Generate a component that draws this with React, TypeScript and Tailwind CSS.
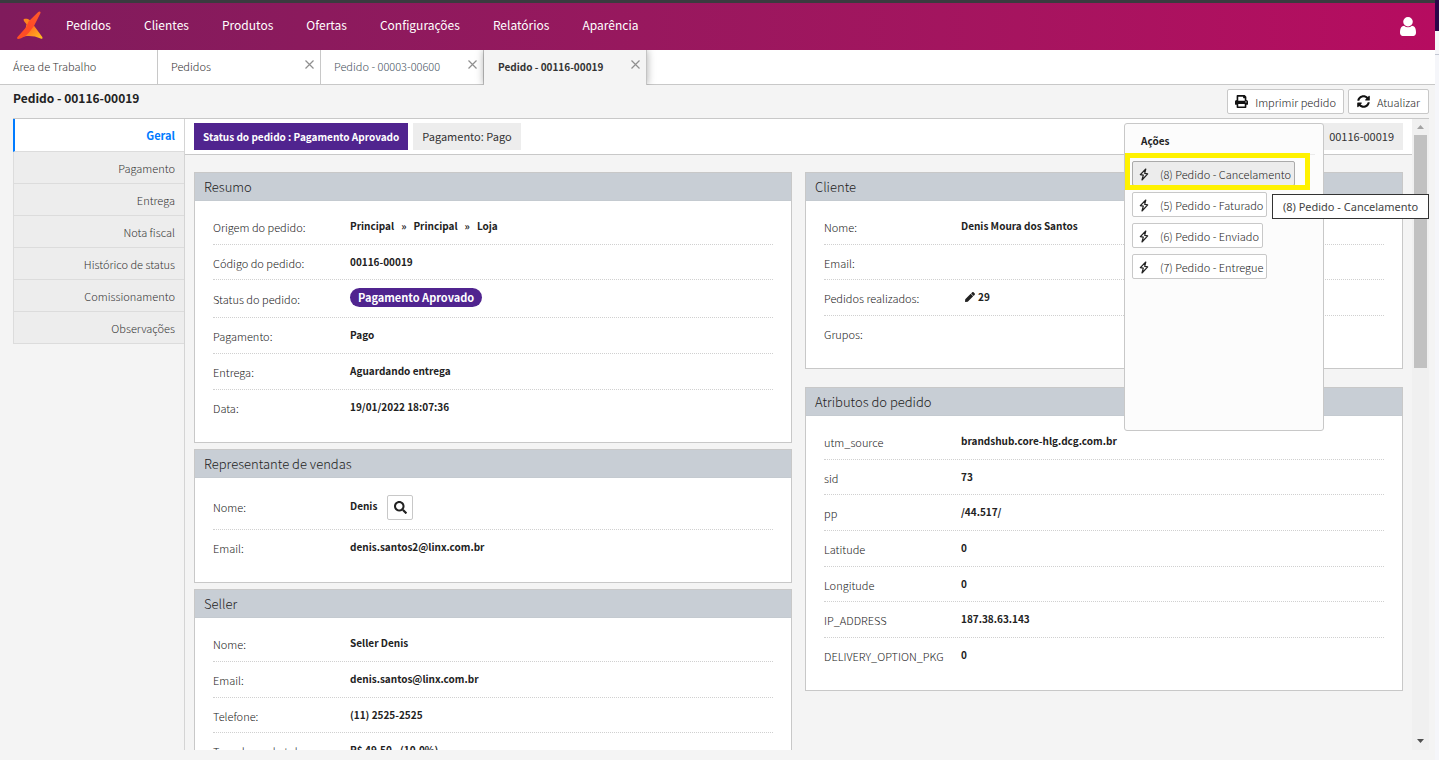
import type { ReactNode } from "react";
import { FaPen, FaPrint, FaSearch, FaSyncAlt } from "react-icons/fa";

type Field = { label: string; value?: ReactNode; size?: "tall" | "badge" | "compact" };

const nav = ["Pedidos", "Clientes", "Produtos", "Ofertas", "Configurações", "Relatórios", "Aparência"];

const sections = ["Geral", "Pagamento", "Entrega", "Nota fiscal", "Histórico de status", "Comissionamento", "Observações"];

const actions = ["(8) Pedido - Cancelamento", "(5) Pedido - Faturado", "(6) Pedido - Enviado", "(7) Pedido - Entregue"];

const summary: Field[] = [
  {
    label: "Origem do pedido:",
    value: (
      <span className="flex gap-[7px]">
        <span>Principal</span>
        <span>»</span>
        <span>Principal</span>
        <span>»</span>
        <span>Loja</span>
      </span>
    ),
  },
  { label: "Código do pedido:", value: "00116-00019", size: "compact" },
  {
    label: "Status do pedido:",
    size: "badge",
    value: (
      <span className="block rounded-full bg-[#50248f] px-2 text-[11px] leading-[19px] text-white">Pagamento Aprovado</span>
    ),
  },
  { label: "Pagamento:", value: "Pago" },
  { label: "Entrega:", value: "Aguardando entrega" },
  { label: "Data:", value: "19/01/2022 18:07:36" },
];

const representative: Field[] = [
  {
    label: "Nome:",
    size: "tall",
    value: (
      <span className="flex gap-[10px]">
        Denis
        <button
          type="button"
          aria-label="Buscar representante"
          className="-mt-px flex h-[25px] w-[26px] items-center justify-center rounded-[2px] border border-[#c8c8c8] bg-white text-[#222]"
        >
          <FaSearch size={13} />
        </button>
      </span>
    ),
  },
  { label: "Email:", value: "denis.santos2@linx.com.br" },
];

const seller: Field[] = [
  { label: "Nome:", value: "Seller Denis" },
  { label: "Email:", value: "denis.santos@linx.com.br" },
  { label: "Telefone:", value: "(11) 2525-2525", size: "compact" },
  { label: "Taxa de marketplace:", value: "R$ 49,50 - (10.0%)" },
];

const customer: Field[] = [
  { label: "Nome:", value: "Denis Moura dos Santos" },
  { label: "Email:", size: "compact" },
  {
    label: "Pedidos realizados:",
    value: (
      <span className="flex items-center gap-[3px] pl-1">
        <FaPen size={10} />
        29
      </span>
    ),
  },
  { label: "Grupos:" },
];

const attributes: Field[] = [
  { label: "utm_source", value: "brandshub.core-hlg.dcg.com.br" },
  { label: "sid", value: "73", size: "compact" },
  { label: "pp", value: "/44.517/" },
  { label: "Latitude", value: "0" },
  { label: "Longitude", value: "0", size: "compact" },
  { label: "IP_ADDRESS", value: "187.38.63.143" },
  { label: "DELIVERY_OPTION_PKG", value: "0" },
];

function Logo() {
  return (
    <svg width="28" height="30" viewBox="0 0 28 30" aria-label="Linx" role="img">
      <defs>
        <linearGradient id="arm" x1="1" y1="0" x2="0" y2="1">
          <stop offset="0" stopColor="#ff5a2a" />
          <stop offset="0.5" stopColor="#ff4a26" />
          <stop offset="1" stopColor="#ff4f23" />
        </linearGradient>
        <linearGradient id="leg" x1="0" y1="0" x2="1" y2="1">
          <stop offset="0" stopColor="#ff8a1c" />
          <stop offset="0.5" stopColor="#ff7a1f" />
          <stop offset="1" stopColor="#ffc220" />
        </linearGradient>
      </defs>
      <path d="M7.6 9.2C9.8 8.2 12 8.8 13.6 10L18.6 16.6L26.3 27C26.9 28.6 26 29.3 24.6 28.6C17.5 25.4 9.5 25.4 3.5 28L9.6 18.5L10.5 14.3C9.4 12.7 7.2 10.6 7.6 9.2Z" fill="url(#leg)" />
      <path d="M22 2.3C23.3 .7 25.2 1.5 24.4 3.3L18 16L13 22.5C10 26 6 28.3 2.5 29C.8 29.1 .7 27.8 1.7 26.7L10 17.5L12.5 11.5Z" fill="url(#arm)" />
    </svg>
  );
}

function UserIcon() {
  return (
    <svg width="16" height="19" viewBox="0 128 1280 1536" preserveAspectRatio="none" fill="currentColor" aria-hidden="true">
      <path d="M1280 1399q0 109-62.5 187t-150.5 78h-854q-88 0-150.5-78t-62.5-187q0-85 8.5-160.5t31.5-152 58.5-131 94-89 134.5-34.5q131 128 313 128t313-128q76 0 134.5 34.5t94 89 58.5 131 31.5 152 8.5 160.5zm-256-887q0 159-112.5 271.5t-271.5 112.5-271.5-112.5-112.5-271.5 112.5-271.5 271.5-112.5 271.5 112.5 112.5 271.5z" />
    </svg>
  );
}

function BoltIcon() {
  return (
    <svg width="10" height="13" viewBox="0 0 10 13" fill="none" stroke="#222" strokeWidth="1.2" strokeLinejoin="round" aria-hidden="true">
      <path d="M6.8 1L1.3 6.6L4.3 7.2L3 12L8.7 5.9L5.7 5.4Z" />
    </svg>
  );
}

function CloseIcon() {
  return (
    <svg width="9" height="9" viewBox="0 0 9 9" stroke="#8f8f8f" strokeWidth="1.2" aria-hidden="true">
      <path d="M.5 .5L8.5 8.5M8.5 .5L.5 8.5" />
    </svg>
  );
}

function Tab({ title, active, link }: { title: string; active?: boolean; link?: boolean }) {
  return (
    <div
      className={
        active
          ? "relative flex h-[35px] w-[163px] items-start justify-between border-r border-[#c4c4c4] bg-[#f4f4f4] pr-[6px] pl-[14px] font-bold text-[#333] shadow-[0_0_8px_rgba(0,0,0,0.35)] [clip-path:inset(0_-10px_0_-10px)]"
          : "flex h-[35px] w-[163px] items-start justify-between border-r border-b border-[#c8c8c8] pr-[6px] pl-[13px]"
      }
    >
      <a
        href="#"
        className={
          active
            ? "text-[10px] leading-[34px]"
            : link
              ? "text-[11px] leading-8 font-light text-[#45525d]"
              : "text-[11px] leading-8 font-light text-[#333]"
        }
      >
        {title}
      </a>
      <button type="button" aria-label={`Fechar ${title}`} className="pt-[10px]">
        <CloseIcon />
      </button>
    </div>
  );
}

function Card({ title, fields }: { title: string; fields: Field[] }) {
  return (
    <section className="border border-[#c8c8c8] bg-white pb-4">
      <h2 className="h-[28px] border-b border-[#c4cad0] bg-[#c8ced5] pl-[9px] text-[13px] leading-[28px] font-light text-[#222]">{title}</h2>
      <dl className="px-[18px] pt-2">
        {fields.map((f) => (
          <div
            key={f.label}
            className={
              f.size === "tall"
                ? "flex h-[44px] border-b border-dotted border-[#d0d0d0] pt-[10px]"
                : f.size === "badge"
                  ? "flex h-[38px] border-b border-dotted border-[#d0d0d0] pt-2"
                  : f.size === "compact"
                    ? "flex h-[35px] border-b border-dotted border-[#d0d0d0] pt-[7px]"
                    : "flex h-9 border-b border-dotted border-[#d0d0d0] pt-[7px] last:border-transparent"
            }
          >
            <dt className="w-[137px] shrink-0 pt-px text-[11px] leading-5 font-light text-[#222]">{f.label}</dt>
            <dd className="text-[10px] leading-5 font-bold text-[#222]">{f.value}</dd>
          </div>
        ))}
      </dl>
    </section>
  );
}

export default function App() {
  return (
    <div className="flex h-screen min-h-[400px] overflow-hidden bg-[#f4f4f4] font-['Noto_Sans_CJK_SC','Noto_Sans',sans-serif] text-[#333]">
      <div className="flex min-w-0 flex-1 flex-col">
        <header className="flex h-[50px] shrink-0 items-center justify-between border-t-3 border-[#3a3b3f] bg-linear-to-r from-[#801b5c] to-[#b60c60] pr-[19px] pl-4 text-white">
          <div className="flex items-center pb-[3px]">
            <Logo />
            <nav className="flex gap-[33px] pl-[22px] text-[12px] leading-5">
              {nav.map((n) => (
                <a key={n} href="#">
                  {n}
                </a>
              ))}
            </nav>
          </div>
          <button type="button" aria-label="Usuário">
            <UserIcon />
          </button>
        </header>

        <div className="flex h-[35px] shrink-0 bg-white">
          <div className="flex h-[35px] w-[158px] items-start border-r border-b border-[#c8c8c8] pl-[13px]">
            <a href="#" className="text-[11px] leading-8 font-light text-[#333]">
              Área de Trabalho
            </a>
          </div>
          <Tab title="Pedidos" />
          <Tab title="Pedido - 00003-00600" link />
          <Tab title="Pedido - 00116-00019" active />
          <div className="flex-1 border-b border-[#c8c8c8]" />
        </div>

        <div className="mr-[6px] ml-[13px] flex h-[34px] shrink-0 items-start justify-between border-b border-[#c8c8c8]">
          <h1 className="pt-[3px] text-[12px] leading-5 font-bold text-[#222]">Pedido - 00116-00019</h1>
          <div className="flex gap-1 pt-1 text-[11px] leading-5 font-light text-[#222]">
            <button type="button" className="flex h-[25px] items-center gap-[7px] rounded-[2px] border border-[#c8c8c8] bg-white px-[7px]">
              <FaPrint size={13} className="text-[#111]" />
              Imprimir pedido
            </button>
            <button type="button" className="flex h-[25px] items-center gap-[7px] rounded-[2px] border border-[#c8c8c8] bg-white px-2">
              <FaSyncAlt size={13} className="text-[#111]" />
              Atualizar
            </button>
          </div>
        </div>

        <div className="mr-[6px] mb-[10px] ml-[13px] flex min-h-0 flex-1">
          <nav className="w-[172px] shrink-0 border-r border-[#d4d4d4] text-right text-[11px] leading-8">
            {sections.map((s, i) => (
              <a
                key={s}
                href="#"
                className={
                  i === 0
                    ? "block h-[33px] border-b border-l-2 border-b-[#dcdcdc] border-l-[#007bff] bg-white pr-[9px] font-bold text-[#007bff]"
                    : "block h-8 border-b border-l border-[#dcdcdc] bg-[#ededed] pr-[9px] font-light text-[#333]"
                }
              >
                {s}
              </a>
            ))}
          </nav>

          <main className="relative min-w-0 flex-1">
            <div className="h-full overflow-hidden">
              <div className="flex h-9 items-start justify-between border-b border-[#c8c8c8] bg-white px-[9px] pt-1 leading-[27px]">
                <div className="flex gap-[5px]">
                  <span className="bg-[#50248f] px-[9px] text-[10px] font-bold text-white">Status do pedido : Pagamento Aprovado</span>
                  <span className="bg-[#ededed] px-[9px] text-[11px]">Pagamento: Pago</span>
                </div>
                <span className="bg-[#ededed] px-[9px] text-[11px]">00116-00019</span>
              </div>

              <div className="grid grid-cols-2 gap-[13px] px-[9px] pt-[17px]">
                <div className="flex flex-col gap-[6px]">
                  <Card title="Resumo" fields={summary} />
                  <Card title="Representante de vendas" fields={representative} />
                  <Card title="Seller" fields={seller} />
                </div>
                <div className="flex flex-col gap-[18px]">
                  <Card title="Cliente" fields={customer} />
                  <Card title="Atributos do pedido" fields={attributes} />
                </div>
              </div>
            </div>

            <aside className="absolute top-1 right-[88px] h-[308px] w-[200px] rounded-[3px] border border-[#c8c8c8] bg-[#fcfcfc]">
              <h3 className="mx-2 border-b border-[#ebebeb] pt-[7px] pb-[3px] pl-2 text-[10px] leading-5 font-bold text-[#222]">Ações</h3>
              <div className="flex flex-col items-start gap-[6px] pt-[6px] pl-[7px]">
                {actions.map((a, i) => (
                  <button
                    key={a}
                    type="button"
                    className={
                      i === 0
                        ? "flex h-[25px] items-center gap-[11px] rounded-[2px] border border-[#aaa] bg-[#ececec] pt-[2px] pr-[3px] pl-[6px] text-[11px] font-light text-[#222]"
                        : "flex h-[25px] items-center gap-[11px] rounded-[2px] border border-[#c8c8c8] bg-white pt-[2px] pr-[3px] pl-[6px] text-[11px] font-light text-[#222]"
                    }
                  >
                    <BoltIcon />
                    {a}
                  </button>
                ))}
              </div>
              <div className="pointer-events-none absolute top-[29px] left-0 h-[37px] w-[185px] border-[5px] border-[#fff200]" />
              <div
                role="tooltip"
                className="absolute top-[70px] left-[147px] h-[25px] w-[157px] border border-[#333] bg-white text-center font-['Noto_Sans',sans-serif] text-[11px] leading-[23px] whitespace-nowrap text-[#444]"
              >
                (8) Pedido - Cancelamento
              </div>
            </aside>
          </main>

          <div className="flex w-[17px] shrink-0 flex-col items-center justify-between bg-[#f0f0f0]" aria-hidden="true">
            <div className="flex h-full min-h-0 w-full flex-col items-center">
              <svg width="17" height="16" viewBox="0 0 17 16" className="shrink-0" fill="#a3a3a3">
                <path d="M5 10h7L8.5 6z" />
              </svg>
              <div className="h-[38%] w-[13px] bg-[#c1c1c1]" />
            </div>
            <svg width="17" height="17" viewBox="0 0 17 17" className="shrink-0" fill="#505050">
              <path d="M5 6h7L8.5 10z" />
            </svg>
          </div>
        </div>
      </div>

      <div className="flex w-1 shrink-0 flex-col bg-[#f5f6fa]">
        <div className="h-[31px] bg-[#2c0549]" />
        <div className="h-[24px] border-b border-[#c3c7d2]" />
      </div>
    </div>
  );
}
